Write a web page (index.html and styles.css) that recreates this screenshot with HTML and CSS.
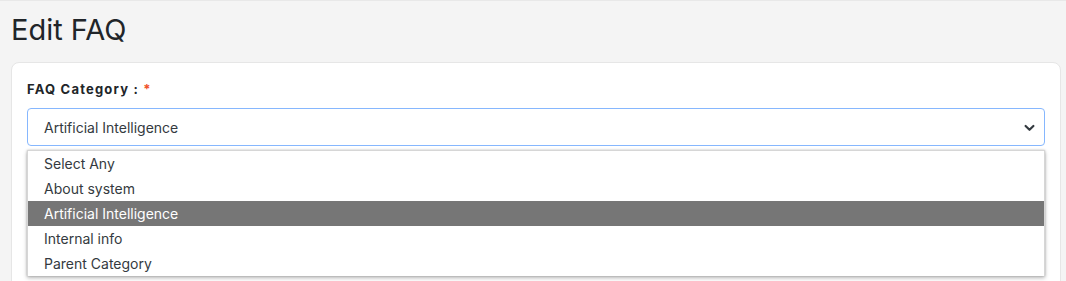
FILE: index.html
```html
<!DOCTYPE html>
<html>
<head>
<meta charset="utf-8">
<link rel="stylesheet" href="styles.css">
</head>
<body>
<div class="page">
  <h1 class="title">Edit FAQ</h1>
  <div class="card">
    <label class="label">FAQ Category : <span class="req">*</span></label>
    <div class="select-wrap">
      <div class="select">
        <span>Artificial Intelligence</span>
        <svg class="chev" width="11" height="8" viewBox="0 0 11 8"><path d="M1.6 2 L5.5 5.8 L9.4 2" fill="none" stroke="#343a40" stroke-width="2.2" stroke-linecap="round" stroke-linejoin="round"/></svg>
      </div>
      <ul class="options">
        <li>Select Any</li>
        <li>About system</li>
        <li class="sel">Artificial Intelligence</li>
        <li>Internal info</li>
        <li>Parent Category</li>
      </ul>
    </div>
  </div>
</div>
</body>
</html>
```
FILE: styles.css
```css
* { box-sizing: border-box; }
html, body { margin: 0; padding: 0; }
body {
  background: #f4f4f4;
  font-family: Inter, "Noto Sans", sans-serif;
  color: #212529;
  border-top: 1px solid #e8e8e8;
  overflow: hidden;
  height: 281px;
}
.page { padding: 0 5px 0 11px; }
.title {
  margin: 0;
  padding-top: 10px;
  height: 61px;
  font-size: 29px;
  font-weight: 400;
  line-height: 38px;
  color: #212529;
}
.card {
  background: #fff;
  border: 1px solid #e6e6e6;
  border-radius: 8px;
  padding: 16px 15px 0 15px;
  height: 300px;
}
.label {
  display: block;
  font-size: 13px;
  font-weight: 700;
  letter-spacing: 1.2px;
  line-height: 20px;
  color: #212529;
  margin-bottom: 9px;
}
.req { color: #f0502a; }
.select-wrap { position: relative; }
.select {
  height: 38px;
  border: 1px solid #86b7fe;
  border-radius: 4px;
  display: flex;
  align-items: center;
  justify-content: space-between;
  padding: 0 9px 0 16px;
  font-size: 14px;
  color: #343a40;
}
.chev { margin-top: 1px; }
.options {
  position: absolute;
  left: 0;
  right: 0;
  top: 42px;
  margin: 0;
  padding: 0;
  list-style: none;
  background: #fff;
  box-shadow: 0 2px 4px rgba(0,0,0,0.28), 0 0 2px rgba(0,0,0,0.2);
  border: 1px solid #d6d6d6;
  border-bottom: none;
}
.options li {
  height: 25px;
  line-height: 25px;
  padding-left: 16px;
  font-size: 14px;
  color: #343a40;
}
.options li.sel {
  background: #767676;
  color: #fff;
}
```
